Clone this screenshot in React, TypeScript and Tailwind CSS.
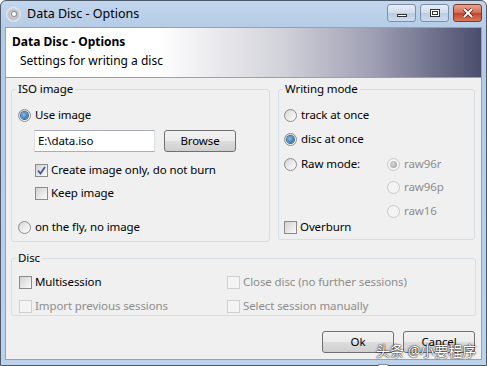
import React from 'react'

const font = { fontFamily: '"Noto Sans", "Noto Sans CJK SC", sans-serif' }

function Radio({ checked = false, disabled = false }: { checked?: boolean; disabled?: boolean }) {
  return (
    <span
      className={`flex h-[13px] w-[13px] shrink-0 items-center justify-center rounded-full border ${
        disabled ? 'border-[#c9c9c9] bg-[#f4f4f4]' : 'border-[#8b8b8b] bg-[linear-gradient(135deg,#d6d6d6,#ffffff)]'
      }`}
    >
      {checked && (
        <span
          className={`h-[7px] w-[7px] rounded-full ${
            disabled
              ? 'bg-[radial-gradient(circle_at_40%_40%,#d8d8d8,#9a9a9a)]'
              : 'bg-[radial-gradient(circle_at_40%_40%,#7fc4f0,#1b4f86)] ring-1 ring-[#3b6a99]'
          }`}
        />
      )}
    </span>
  )
}

function Check({ checked = false, disabled = false }: { checked?: boolean; disabled?: boolean }) {
  return (
    <span
      className={`flex h-[13px] w-[13px] shrink-0 items-center justify-center border ${
        disabled ? 'border-[#cfcfcf] bg-[#f4f4f4]' : 'border-[#8b8b8b] bg-[linear-gradient(135deg,#d2d2d2,#fafafa)]'
      }`}
    >
      {checked && (
        <svg width="9" height="9" viewBox="0 0 9 9">
          <path d="M1 4.5 L3.5 7.5 L8 1" fill="none" stroke="#3c5a9a" strokeWidth="1.8" />
        </svg>
      )}
    </span>
  )
}

function Button({ label, className = '' }: { label: string; className?: string }) {
  return (
    <div
      className={`flex h-[22px] items-center justify-center rounded-[3px] border border-[#707070] bg-[linear-gradient(#f2f2f2_0%,#ebebeb_50%,#dddddd_51%,#cfcfcf_100%)] text-black ${className}`}
    >
      {label}
    </div>
  )
}

function Group({ title, className = '', children }: { title: string; className?: string; children: React.ReactNode }) {
  return (
    <fieldset className={`rounded-[3px] border border-[#d5dfe5] ${className}`}>
      <legend className="ml-[4px] px-[2px] leading-[16px] text-black">{title}</legend>
      {children}
    </fieldset>
  )
}

export default function App() {
  return (
    <div className="relative h-[366px] w-[487px] overflow-hidden bg-white" style={font}>
      <div className="flex h-full flex-col rounded-t-[6px] border border-[#4d5a6b] bg-[linear-gradient(#c2d6ec,#b4cbe6_30px,#bcd2ea)]">
        {/* title bar */}
        <div className="flex h-[26px] shrink-0 items-center pl-[5px] pr-[4px]">
          <span className="flex h-[15px] w-[15px] items-center justify-center rounded-full bg-[radial-gradient(circle,#ffffff_0%,#b8bcc4_40%,#e9ecf0_70%,#9aa0aa_100%)]">
            <span className="h-[4px] w-[4px] rounded-full bg-white ring-1 ring-[#8a8f99]" />
          </span>
          <span className="ml-[6px] text-[12.5px] text-black">Data Disc - Options</span>
          <div className="ml-auto flex items-start gap-[4px] self-start pt-[3px]">
            <div className="flex h-[18px] w-[29px] items-center justify-center rounded-[3px] border border-[#7d8fa8] bg-[linear-gradient(#e6eef8,#cfdcec_50%,#b9cce4_51%,#cbdcef)]">
              <span className="mt-[4px] h-[3px] w-[10px] border border-[#333] bg-white" />
            </div>
            <div className="flex h-[18px] w-[29px] items-center justify-center rounded-[3px] border border-[#7d8fa8] bg-[linear-gradient(#e6eef8,#cfdcec_50%,#b9cce4_51%,#cbdcef)]">
              <span className="h-[8px] w-[10px] border border-[#333] bg-white p-[1px]">
                <span className="block h-full w-full border border-[#333]" />
              </span>
            </div>
            <div className="flex h-[18px] w-[29px] items-center justify-center rounded-[3px] border border-[#7a3a2e] bg-[linear-gradient(#eaa38f,#d4694f_50%,#c2432a_51%,#d87a5f)]">
              <svg width="12" height="10" viewBox="0 0 12 10">
                <path d="M2 1 L10 9 M10 1 L2 9" stroke="#4a1a10" strokeWidth="3.4" />
                <path d="M2 1 L10 9 M10 1 L2 9" stroke="#ffffff" strokeWidth="2" />
              </svg>
            </div>
          </div>
        </div>

        {/* client */}
        <div className="mx-[4px] flex flex-1 flex-col border border-[#8ba3c2] bg-[#f0f0f0]">
          <div className="flex h-[50px] shrink-0 flex-col border-b border-[#a0a0a0] bg-[linear-gradient(to_right,#ffffff_32%,#d2d2da_58%,#9c9db2_78%,#4b4d6d_100%)] pl-[6px] pt-[6px] text-[12px]">
            <span className="font-bold leading-[16px] text-black">Data Disc - Options</span>
            <span className="ml-[8px] mt-[3px] leading-[16px] text-black">Settings for writing a disc</span>
          </div>

          <div className="flex flex-1 flex-col px-[5px] pt-[3px] text-[11.5px] leading-[18px] tracking-[-0.1px] text-black">
            <div className="flex gap-[8px]">
              <Group title="ISO image" className="h-[161px] w-[259px]">
                <div className="flex flex-col px-[6px]">
                  <div className="mt-[9px] flex items-center gap-[4px]">
                    <Radio checked />
                    <span>Use image</span>
                  </div>
                  <div className="mt-[6px] flex items-center">
                    <div className="ml-[16px] flex h-[22px] w-[121px] items-center border border-[#abadb3] border-l-[#e2e3ea] border-r-[#dbdfe6] bg-white pl-[3px]">
                      E:\data.iso
                    </div>
                    <Button label="Browse" className="ml-[9px] w-[72px]" />
                  </div>
                  <div className="ml-[17px] mt-[9px] flex items-center gap-[3px]">
                    <Check checked />
                    <span>Create image only, do not burn</span>
                  </div>
                  <div className="ml-[17px] mt-[5px] flex items-center gap-[3px]">
                    <Check />
                    <span>Keep image</span>
                  </div>
                  <div className="mt-[16px] flex items-center gap-[4px]">
                    <Radio />
                    <span>on the fly, no image</span>
                  </div>
                </div>
              </Group>
              <Group title="Writing mode" className="h-[159px] w-[197px]">
                <div className="flex flex-col px-[5px]">
                  <div className="mt-[9px] flex items-center gap-[4px]">
                    <Radio />
                    <span>track at once</span>
                  </div>
                  <div className="mt-[6px] flex items-center gap-[4px]">
                    <Radio checked />
                    <span>disc at once</span>
                  </div>
                  <div className="mt-[7px] flex items-center">
                    <div className="flex w-[103px] items-center gap-[4px]">
                      <Radio />
                      <span>Raw mode:</span>
                    </div>
                    <div className="flex items-center gap-[4px] text-[#8d8d8d]">
                      <Radio checked disabled />
                      <span>raw96r</span>
                    </div>
                  </div>
                  <div className="ml-[103px] mt-[5px] flex items-center gap-[4px] text-[#8d8d8d]">
                    <Radio disabled />
                    <span>raw96p</span>
                  </div>
                  <div className="ml-[103px] mt-[6px] flex items-center gap-[4px] text-[#8d8d8d]">
                    <Radio disabled />
                    <span>raw16</span>
                  </div>
                  <div className="mt-[-2px] flex items-center gap-[3px]">
                    <Check />
                    <span>Overburn</span>
                  </div>
                </div>
              </Group>
            </div>

            <Group title="Disc" className="mt-[8px] h-[66px] w-[465px]">
              <div className="grid grid-cols-[208px_1fr] gap-y-[6px] px-[7px] pt-[7px]">
                <div className="flex items-center gap-[3px]">
                  <Check />
                  <span>Multisession</span>
                </div>
                <div className="flex items-center gap-[3px] text-[#8d8d8d]">
                  <Check disabled />
                  <span>Close disc (no further sessions)</span>
                </div>
                <div className="flex items-center gap-[3px] text-[#8d8d8d]">
                  <Check disabled />
                  <span>Import previous sessions</span>
                </div>
                <div className="flex items-center gap-[3px] text-[#8d8d8d]">
                  <Check disabled />
                  <span>Select session manually</span>
                </div>
              </div>
            </Group>

            <div className="mt-[15px] flex justify-end gap-[9px] pr-[1px]">
              <Button label="Ok" className="w-[72px]" />
              <Button label="Cancel" className="w-[72px]" />
            </div>
          </div>
        </div>
        <div className="h-[5px] shrink-0" />
      </div>

      {/* watermark */}
      <div className="absolute left-[376px] top-[341px] text-[14px] leading-[20px] text-white [text-shadow:0_0_2px_#000,0_0_1px_#000]">
        头条 @小要程序员
      </div>
    </div>
  )
}
